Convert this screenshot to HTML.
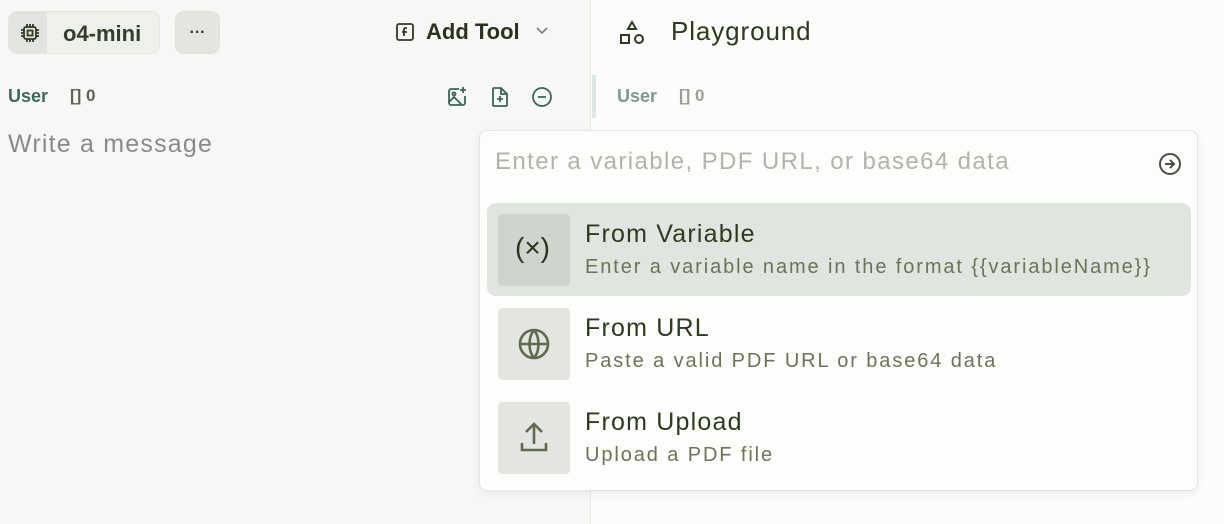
<!DOCTYPE html>
<html><head><style>
*{box-sizing:border-box;margin:0;padding:0}
body{width:1224px;height:524px;overflow:hidden;font-family:"Liberation Sans",sans-serif;background:#fcfcfb;position:relative}
.left{position:absolute;left:0;top:0;width:591px;height:524px;background:#f7f7f6;border-right:1px solid #e6e6e3}
.abs{position:absolute}
.pill{position:absolute;left:8px;top:11px;width:152px;height:43px;border:1px solid #e4e6e1;border-radius:9px;background:#eef0ec;overflow:hidden}
.pill .ic{position:absolute;left:0;top:0;width:38px;height:43px;background:#e2e5df}
.dots{position:absolute;left:175px;top:11px;width:45px;height:43px;border-radius:9px;background:#e3e5e0;border:1px solid #dfe1dc;text-align:center;line-height:41px;font-weight:bold;color:#333;font-size:16px}
.t{position:absolute;white-space:nowrap}
.menu{position:absolute;left:479px;top:130px;width:719px;height:361px;background:#fdfdfc;border:1px solid #e4e5e2;border-radius:8px;box-shadow:0 3px 8px rgba(0,0,0,.06)}
.item{position:absolute;left:7px;width:704px;height:93px;border-radius:9px}
.ibox{position:absolute;left:11px;top:11px;width:72px;height:72px;border-radius:4px;background:#e2e5e0}
.ttl{position:absolute;left:98px;top:17px;font-size:25px;color:#2d3a1e;letter-spacing:1.2px}
.sub{position:absolute;left:98px;top:53px;font-size:20px;color:#6b7358;letter-spacing:1.9px}
</style></head><body>
<div class="left">
 <div class="pill"><div class="ic">
  <svg class="abs" style="left:11px;top:11px" width="20" height="20" viewBox="0 0 20 20" fill="none" stroke="#2f3a24" stroke-width="1.8"><rect x="4" y="4" width="12" height="12" rx="2"/><rect x="7.5" y="7.5" width="5" height="5"/><path d="M7 1v3M10 1v3M13 1v3M7 16v3M10 16v3M13 16v3M1 7h3M1 10h3M1 13h3M16 7h3M16 10h3M16 13h3"/></svg></div>
  <div class="t" style="left:54px;top:9px;font-size:22px;font-weight:bold;color:#333d2a">o4-mini</div></div>
 <div class="dots">···</div>
 <svg class="abs" style="left:395px;top:22px" width="20" height="20" viewBox="0 0 20 20" fill="none" stroke="#2f3a24" stroke-width="1.8"><rect x="2" y="2" width="16" height="16" rx="2"/><path d="M12 6h-1.5a1.5 1.5 0 0 0-1.5 1.5V14M7 10h5"/></svg>
 <div class="t" style="left:426px;top:19px;font-size:22px;font-weight:bold;color:#2a331f">Add Tool</div>
 <svg class="abs" style="left:535px;top:26px" width="14" height="10" viewBox="0 0 14 10" fill="none" stroke="#7a7f73" stroke-width="1.6"><path d="M2 2l5 5 5-5"/></svg>
 <div class="t" style="left:8px;top:86px;font-size:18px;font-weight:bold;color:#3f6a5c">User</div>
 <div class="t" style="left:70px;top:86px;font-size:17px;font-weight:bold;color:#5a6552">[]&nbsp;0</div>
 <svg class="abs" style="left:446px;top:86px" width="22" height="22" viewBox="0 0 22 22" fill="none" stroke="#3b6658" stroke-width="1.8"><path d="M13 3H5a2 2 0 0 0-2 2v12a2 2 0 0 0 2 2h12a2 2 0 0 0 2-2V10M3 16l5-5 8 8M17 1v6M14 4h6"/><circle cx="8" cy="8" r="1.5"/></svg>
 <svg class="abs" style="left:489px;top:86px" width="22" height="22" viewBox="0 0 22 22" fill="none" stroke="#3b6658" stroke-width="1.8"><path d="M12 2H5a1 1 0 0 0-1 1v16a1 1 0 0 0 1 1h12a1 1 0 0 0 1-1V8zM12 2v6h6M11 10v6M8 13h6"/></svg>
 <svg class="abs" style="left:531px;top:86px" width="22" height="22" viewBox="0 0 22 22" fill="none" stroke="#3b6658" stroke-width="1.8"><circle cx="11" cy="11" r="9"/><path d="M7 11h8"/></svg>
 <div class="t" style="left:8px;top:130px;font-size:25px;color:#8a8a88;letter-spacing:1.2px">Write a message</div>
</div>
<div class="abs" style="left:592px;top:75px;width:4px;height:43px;background:#dce8e6"></div>
<svg class="abs" style="left:619px;top:20px" width="26" height="26" viewBox="0 0 26 26" fill="none" stroke="#2f3a24" stroke-width="2"><path d="M13 2l4 7H9z"/><rect x="2" y="15" width="8" height="8"/><circle cx="20" cy="19" r="4"/></svg>
<div class="t" style="left:671px;top:16px;font-size:26px;color:#2d3a1e;letter-spacing:0.9px">Playground</div>
<div class="t" style="left:617px;top:86px;font-size:18px;font-weight:bold;color:#7b9a90">User</div>
<div class="t" style="left:679px;top:86px;font-size:17px;font-weight:bold;color:#9a9e94">[]&nbsp;0</div>
<div class="menu">
 <div class="t" style="left:15px;top:17px;font-size:24px;color:#b0b4aa;letter-spacing:1.4px">Enter a variable, PDF URL, or base64 data</div>
 <svg class="abs" style="left:678px;top:21px" width="24" height="24" viewBox="0 0 24 24" fill="none" stroke="#4a5240" stroke-width="2"><circle cx="12" cy="12" r="10"/><path d="M7 12h9M12 8l4 4-4 4"/></svg>
 <div class="item" style="top:72px;background:#e1e5df"><div class="ibox" style="background:#cfd4cc"><div class="t" style="left:17px;top:18px;font-size:28px;color:#2a331f">(×)</div></div>
  <div class="ttl">From Variable</div><div class="sub">Enter a variable name in the format {{variableName}}</div></div>
 <div class="item" style="top:166px"><div class="ibox"><svg class="abs" style="left:15px;top:15px" width="42" height="42" viewBox="0 0 42 42" fill="none" stroke="#5f6a50" stroke-width="2.6"><circle cx="21" cy="21" r="14"/><path d="M7 21h28M21 7c-6 7-6 21 0 28M21 7c6 7 6 21 0 28"/></svg></div>
  <div class="ttl">From URL</div><div class="sub">Paste a valid PDF URL or base64 data</div></div>
 <div class="item" style="top:260px"><div class="ibox"><svg class="abs" style="left:15px;top:15px" width="42" height="42" viewBox="0 0 42 42" fill="none" stroke="#5f6a50" stroke-width="2.6"><path d="M21 27V7M13 15l8-8 8 8M9 26v7h24v-7"/></svg></div>
  <div class="ttl">From Upload</div><div class="sub">Upload a PDF file</div></div>
</div>
</body></html>
